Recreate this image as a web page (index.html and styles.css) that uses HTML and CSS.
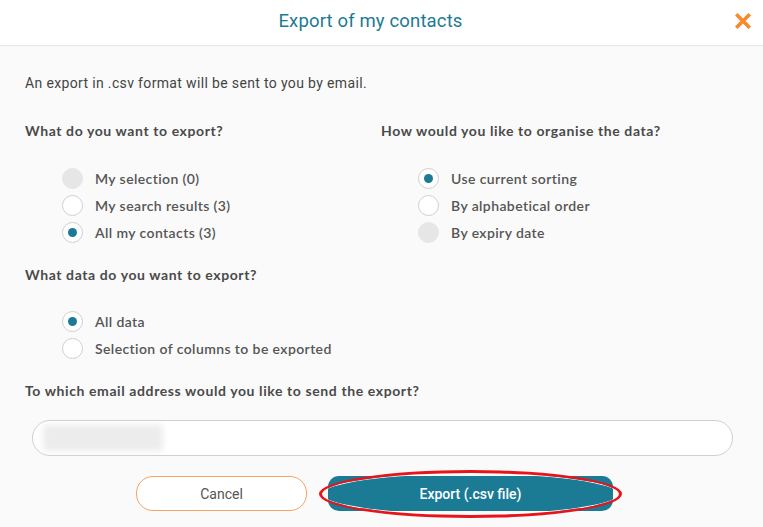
FILE: index.html
```html
<!DOCTYPE html>
<html lang="en">
<head>
<meta charset="utf-8">
<title>Export of my contacts</title>
<link rel="stylesheet" href="styles.css">
</head>
<body>
<div class="modal">
  <header class="modal-header">
    <span></span>
    <h1 class="title">Export of my contacts</h1>
    <button class="close" aria-label="Close">
      <svg width="16" height="16" viewBox="0 0 16 16"><path d="M2.5 2.5 L13.5 13.5 M13.5 2.5 L2.5 13.5" stroke="#f98a2c" stroke-width="3.6" stroke-linecap="square" fill="none"/></svg>
    </button>
  </header>
  <div class="modal-body">
    <p class="intro">An export in .csv format will be sent to you by email.</p>
    <div class="columns">
      <section class="group">
        <h2 class="label">What do you want to export?</h2>
        <ul class="radios">
          <li class="radio-row"><span class="radio disabled"></span><span>My selection (0)</span></li>
          <li class="radio-row"><span class="radio"></span><span>My search results (3)</span></li>
          <li class="radio-row"><span class="radio checked"></span><span>All my contacts (3)</span></li>
        </ul>
      </section>
      <section class="group">
        <h2 class="label">How would you like to organise the data?</h2>
        <ul class="radios">
          <li class="radio-row"><span class="radio checked"></span><span>Use current sorting</span></li>
          <li class="radio-row"><span class="radio"></span><span>By alphabetical order</span></li>
          <li class="radio-row"><span class="radio disabled"></span><span>By expiry date</span></li>
        </ul>
      </section>
    </div>
    <section class="group second">
      <h2 class="label">What data do you want to export?</h2>
      <ul class="radios">
        <li class="radio-row"><span class="radio checked"></span><span>All data</span></li>
        <li class="radio-row"><span class="radio"></span><span>Selection of columns to be exported</span></li>
      </ul>
    </section>
    <h2 class="label email-label">To which email address would you like to send the export?</h2>
    <div class="field"><span class="blurred"></span></div>
    <div class="actions">
      <button class="btn cancel">Cancel</button>
      <button class="btn primary">Export (.csv file)<span class="highlight"></span></button>
    </div>
  </div>
</div>
</body>
</html>
```
FILE: styles.css
```css
* { box-sizing: border-box; }
html, body { margin: 0; padding: 0; }
body {
  width: 763px;
  height: 527px;
  overflow: hidden;
  background: #fafafa;
  font-family: "Lato", "Noto Sans", sans-serif;
  color: #4a4a4a;
}
.modal { width: 763px; height: 527px; background: #fafafa; }
.modal-header {
  height: 46px;
  background: #ffffff;
  border-bottom: 1px solid #e6e6e6;
  display: grid;
  grid-template-columns: 1fr auto 1fr;
  align-items: center;
  padding-right: 22px;
}
.title {
  margin: 0;
  font-family: "Roboto", sans-serif;
  font-weight: 400;
  font-size: 18.5px;
  color: #1d7a93;
  letter-spacing: 0.15px;
  padding-bottom: 3px;
}
.close {
  justify-self: end;
  margin-right: -10px;
  margin-bottom: 3px;
  border: 0;
  background: none;
  padding: 0;
  width: 16px;
  height: 16px;
  display: flex;
}
.modal-body { padding: 27px 25px 0 25px; }
.intro {
  margin: 0;
  font-family: "Roboto", sans-serif;
  font-size: 14px;
  line-height: 20px;
  letter-spacing: 0.35px;
  color: #444;
}
.columns {
  display: grid;
  grid-template-columns: 356px 1fr;
  margin-top: 28px;
}
.label {
  margin: 0;
  font-size: 14px;
  line-height: 20px;
  font-weight: 700;
  color: #4a4a4a;
  letter-spacing: 0.6px;
}
.radios {
  list-style: none;
  margin: 24px 0 0 0;
  padding: 0 0 0 37px;
}
.radio-row {
  height: 27px;
  display: flex;
  align-items: center;
  gap: 12px;
  font-size: 14px;
  font-weight: 600;
  color: #555;
  letter-spacing: 0.4px;
}
.radio {
  width: 21px;
  height: 21px;
  border-radius: 50%;
  background: #fff;
  border: 1px solid #cfcfcf;
  display: flex;
  align-items: center;
  justify-content: center;
  flex: none;
}
.radio.disabled { background: #e6e6e6; border-color: #e6e6e6; }
.radio.checked::after {
  content: "";
  width: 9px;
  height: 9px;
  border-radius: 50%;
  background: #1b7a94;
}
.second { margin-top: 19px; }
.second .radios { margin-top: 23px; }
.email-label { margin-top: 19px; }
.field {
  margin: 19px 5px 0 7px;
  height: 36px;
  border: 1px solid #cfcfcf;
  border-radius: 18px;
  background: #fff;
  padding: 4px 10px;
}
.blurred {
  display: block;
  width: 120px;
  height: 26px;
  background: #ececec;
  filter: blur(3px);
}
.actions {
  display: flex;
  gap: 21px;
  margin-top: 20px;
  padding-left: 111px;
}
.btn {
  height: 35px;
  border-radius: 17px;
  font-family: "Roboto", sans-serif;
  font-size: 14px;
  cursor: pointer;
}
.cancel {
  width: 171px;
  background: #fff;
  border: 1px solid #f8a35f;
  color: #555;
}
.primary {
  position: relative;
  width: 285px;
  background: #1b7a94;
  border: 0;
  border-radius: 11px;
  color: #fff;
  font-weight: 500;
}
.highlight {
  position: absolute;
  top: -6px;
  bottom: -7px;
  left: -9px;
  right: -9px;
  border: 3px solid #e8141b;
  border-radius: 50%;
  box-shadow: inset 0 0 0 1px #fff;
  pointer-events: none;
}
```
